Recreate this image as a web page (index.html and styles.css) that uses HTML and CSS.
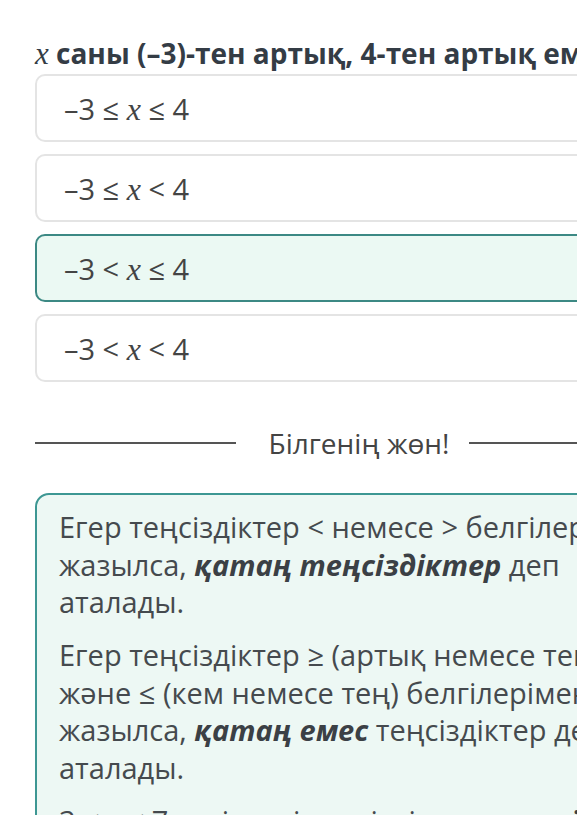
FILE: index.html
```html
<!DOCTYPE html>
<html lang="kk">
<head>
<meta charset="utf-8">
<title>Теңсіздіктер</title>
<link rel="stylesheet" href="styles.css">
</head>
<body>
<div class="viewport">
  <main class="page">
    <h1 class="question"><span class="var">x</span> саны (–3)-тен артық, 4-тен артық емес сан болсын.</h1>
    <div class="options">
      <div class="option"><span>–3 ≤ <span class="var">x</span> ≤ 4</span></div>
      <div class="option"><span>–3 ≤ <span class="var">x</span> &lt; 4</span></div>
      <div class="option selected"><span>–3 &lt; <span class="var">x</span> ≤ 4</span></div>
      <div class="option"><span>–3 &lt; <span class="var">x</span> &lt; 4</span></div>
    </div>
    <div class="divider">
      <span class="line"></span>
      <span class="divider-text">Білгенің жөн!</span>
      <span class="line"></span>
    </div>
    <section class="info">
      <p>Егер теңсіздіктер &lt; немесе &gt; белгілерімен жазылса, <b><i>қатаң теңсіздіктер</i></b> деп аталады.</p>
      <p>Егер теңсіздіктер ≥ (артық немесе тең) және ≤ (кем немесе тең) белгілерімен жазылса, <b><i>қатаң емес</i></b> теңсіздіктер деп аталады.</p>
      <p>3 &lt; <span class="var">x</span> &lt; 7 түріндегі теңсіздік <b><i>қос теңсіздік</i></b> деп аталады.</p>
    </section>
  </main>
</div>
</body>
</html>
```

FILE: styles.css
```css
html, body {
  margin: 0;
  padding: 0;
  background: #ffffff;
  overflow: hidden;
}

.viewport {
  height: 815px;
  overflow: hidden;
}

.page {
  width: 650px;
  padding: 37px 0 0 35px;
  font-family: "Open Sans", "Noto Sans", sans-serif;
  color: #444a4f;
}

.var {
  font-family: "Liberation Serif", "DejaVu Serif", serif;
  font-style: italic;
  font-weight: 400;
}

.question {
  margin: 0 0 4px;
  font-size: 28px;
  line-height: 32px;
  font-weight: 700;
  color: #343c45;
  white-space: nowrap;
}

.question .var {
  font-size: 31px;
}

.options {
  display: flex;
  flex-direction: column;
  gap: 12px;
}

.option {
  height: 68px;
  box-sizing: border-box;
  display: flex;
  align-items: center;
  padding-left: 27px;
  border: 2px solid #e4e4e4;
  border-radius: 10px;
  background: #ffffff;
  font-size: 29px;
  color: #444;
}

.option .var {
  font-size: 32px;
}

.option.selected {
  border-color: #3c8984;
  background: #ebf9f3;
}

.divider {
  display: flex;
  align-items: center;
  margin: 41px 15px 0 0;
  height: 40px;
}

.line {
  flex: 1;
  height: 2px;
  background: #555;
}

.divider-text {
  padding: 0 20px 0 33px;
  font-size: 28px;
  color: #444;
}

.info {
  margin-top: 30px;
  border: 2px solid #3d9793;
  border-radius: 14px;
  background: #edf8f4;
  padding: 13px 22px;
}

.info p {
  margin: 0 0 15.5px;
  font-size: 29px;
  line-height: 37.5px;
  color: #454a4e;
}

.info b {
  color: #3b4045;
}
```
